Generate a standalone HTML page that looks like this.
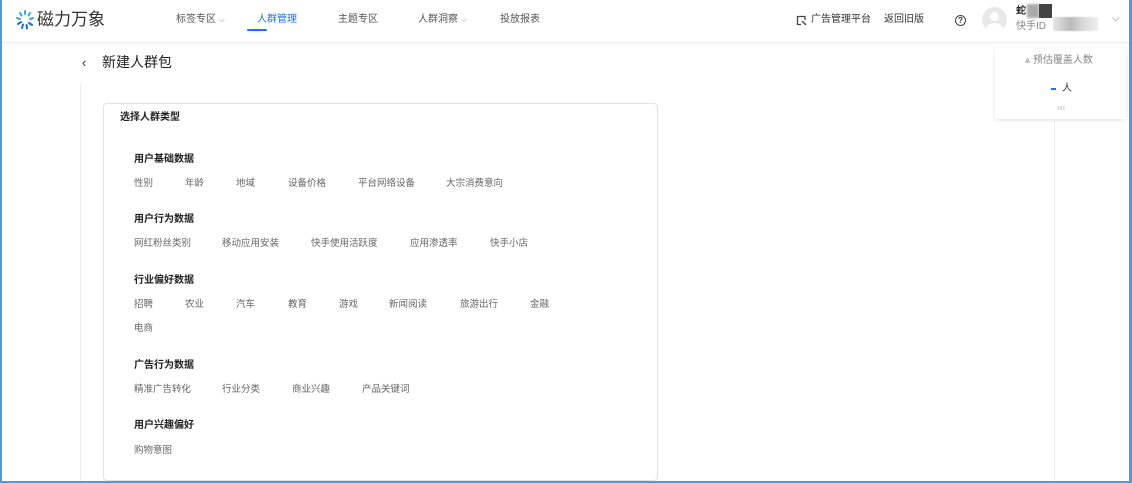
<!DOCTYPE html>
<html><head><meta charset="utf-8"><style>
*{margin:0;padding:0;box-sizing:border-box}
body{width:1132px;height:483px;overflow:hidden;background:#fff;font-family:"Liberation Sans","Noto Sans CJK SC",sans-serif;color:#333;position:relative}
.a{position:absolute;white-space:nowrap;line-height:1}
.frame{position:absolute;left:0;top:0;width:1132px;height:483px;border-left:2px solid #4a9be0;border-right:3px solid #4a9be0;border-bottom:2px solid #4a9be0;pointer-events:none;z-index:10}
.hdr{position:absolute;left:0;top:0;width:1132px;height:43px;border-bottom:1px solid #eceef2;box-shadow:0 1px 3px rgba(0,0,0,.04)}
.nav{font-size:10px;color:#555;top:15px}
.t{font-size:10px;font-weight:bold;color:#222}
.i{font-size:9.5px;color:#666}
</style></head><body>
<div class="hdr"></div>
<svg class="a" style="left:14px;top:9px" width="22" height="22" viewBox="0 0 22 22">
<g stroke="#3aa7d8" stroke-width="2" stroke-linecap="round">
<line x1="11" y1="2" x2="11" y2="5"/><line x1="16" y1="4" x2="14.5" y2="6.5"/><line x1="19" y1="9" x2="16" y2="10"/>
<line x1="3" y1="9" x2="6" y2="10"/><line x1="6" y1="4" x2="7.5" y2="6.5"/>
<line x1="4" y1="15" x2="7" y2="13" stroke="#1b6fc2"/><line x1="8" y1="19" x2="9" y2="15.5" stroke="#1b6fc2"/><line x1="13" y1="19.5" x2="12.5" y2="16" stroke="#1b6fc2"/><line x1="18" y1="16" x2="15" y2="14" stroke="#1b6fc2"/>
</g></svg>
<div class="a" style="left:37px;top:11px;font-size:17px;color:#333">磁力万象</div>
<div class="a nav" style="left:176px">标签专区 <span style="font-size:8px;color:#999">⌵</span></div>
<div class="a nav" style="left:257px;color:#1a73e8">人群管理</div>
<div class="a" style="left:247px;top:29px;width:20px;height:2px;background:#1a73e8;border-radius:1px"></div>
<div class="a nav" style="left:338px">主题专区</div>
<div class="a nav" style="left:418px">人群洞察 <span style="font-size:8px;color:#999">⌵</span></div>
<div class="a nav" style="left:500px">投放报表</div>
<svg class="a" style="left:796px;top:15px" width="11" height="11" viewBox="0 0 11 11"><path d="M9 5V1.5H1.5V9.5H5" fill="none" stroke="#444" stroke-width="1.3"/><path d="M6 6L10 10" stroke="#444" stroke-width="1.3"/></svg>
<div class="a nav" style="left:811px;color:#333">广告管理平台</div>
<div class="a nav" style="left:884px;color:#333">返回旧版</div>
<div class="a" style="left:955px;top:15px;width:11px;height:11px;border:1.3px solid #444;border-radius:50%;font-size:8px;text-align:center;line-height:9px;font-weight:bold">?</div>
<div class="a" style="left:982px;top:7px;width:25px;height:25px;border-radius:50%;background:#e8e8e8;overflow:hidden"><div style="position:absolute;left:8px;top:5px;width:9px;height:9px;border-radius:50%;background:#fff"></div><div style="position:absolute;left:4px;top:16px;width:17px;height:14px;border-radius:50%;background:#fff"></div></div>
<div class="a" style="left:1016px;top:7px;font-size:10px;font-weight:bold;color:#222">蛇</div>
<div class="a" style="left:1027px;top:4px;width:12px;height:14px;background:#aaa;filter:blur(1px)"></div>
<div class="a" style="left:1039px;top:4px;width:13px;height:14px;background:#444"></div>
<div class="a" style="left:1016px;top:22px;font-size:10px;color:#888">快手ID</div>
<div class="a" style="left:1053px;top:17px;width:45px;height:14px;background:linear-gradient(90deg,#e4e4e4,#bbb 40%,#ddd 70%,#eee);filter:blur(.5px)"></div>
<div class="a" style="left:1112px;top:14px;font-size:10px;color:#777">⌵</div>

<div class="a" style="left:82px;top:56px;font-size:13px;color:#333">‹</div>
<div class="a" style="left:102px;top:55px;font-size:14px;color:#222">新建人群包</div>
<div class="a" style="left:80px;top:84px;width:1px;height:399px;background:#eee"></div>
<div class="a" style="left:1054px;top:120px;width:1px;height:363px;background:#eee"></div>

<div class="a" style="left:103px;top:103px;width:555px;height:378px;border:1px solid #e2e2e2;border-radius:4px"></div>
<div class="a t" style="left:120px;top:113px">选择人群类型</div>

<div class="a t" style="left:134px;top:155px">用户基础数据</div>
<div class="a i" style="left:134px;top:179px">性别</div><div class="a i" style="left:185px;top:179px">年龄</div><div class="a i" style="left:236px;top:179px">地域</div><div class="a i" style="left:288px;top:179px">设备价格</div><div class="a i" style="left:358px;top:179px">平台网络设备</div><div class="a i" style="left:446px;top:179px">大宗消费意向</div>

<div class="a t" style="left:134px;top:215px">用户行为数据</div>
<div class="a i" style="left:134px;top:239px">网红粉丝类别</div><div class="a i" style="left:222px;top:239px">移动应用安装</div><div class="a i" style="left:311px;top:239px">快手使用活跃度</div><div class="a i" style="left:410px;top:239px">应用渗透率</div><div class="a i" style="left:490px;top:239px">快手小店</div>

<div class="a t" style="left:134px;top:276px">行业偏好数据</div>
<div class="a i" style="left:134px;top:300px">招聘</div><div class="a i" style="left:185px;top:300px">农业</div><div class="a i" style="left:236px;top:300px">汽车</div><div class="a i" style="left:288px;top:300px">教育</div><div class="a i" style="left:339px;top:300px">游戏</div><div class="a i" style="left:389px;top:300px">新闻阅读</div><div class="a i" style="left:460px;top:300px">旅游出行</div><div class="a i" style="left:530px;top:300px">金融</div>
<div class="a i" style="left:134px;top:324px">电商</div>

<div class="a t" style="left:134px;top:361px">广告行为数据</div>
<div class="a i" style="left:134px;top:385px">精准广告转化</div><div class="a i" style="left:222px;top:385px">行业分类</div><div class="a i" style="left:292px;top:385px">商业兴趣</div><div class="a i" style="left:362px;top:385px">产品关键词</div>

<div class="a t" style="left:134px;top:421px">用户兴趣偏好</div>
<div class="a i" style="left:134px;top:446px">购物意图</div>

<div class="a" style="left:995px;top:48px;width:131px;height:71px;background:#fff;box-shadow:0 1px 4px rgba(0,0,0,.12)"></div>
<div class="a" style="left:1025px;top:56px;font-size:10px;color:#888"><span style="font-size:9px">⩓</span> 预估覆盖人数</div>
<div class="a" style="left:1051px;top:88px;width:5px;height:2px;background:#1a73e8"></div>
<div class="a" style="left:1062px;top:84px;font-size:10px;color:#333">人</div>
<div class="a" style="left:1057px;top:106px;width:8px;height:4px;background-image:radial-gradient(#bbb 40%,transparent 45%);background-size:2.7px 2px"></div>
<div class="frame"></div>
</body></html>
